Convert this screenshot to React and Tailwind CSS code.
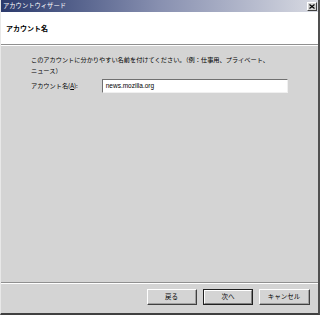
import React from 'react';

const jp = { fontFamily: '"Noto Sans CJK JP", "Liberation Sans", sans-serif' };

const Button = ({ label, isDefault }) => (
  <div
    className={
      'h-[16px] flex items-center justify-center bg-[#d4d4d4] text-[6.5px] text-black ' +
      (isDefault ? 'border border-[#202020]' : 'border border-t-white border-l-white border-r-[#404040] border-b-[#404040]')
    }
  >
    <div
      className={
        'w-full h-full flex items-center justify-center ' +
        (isDefault
          ? 'border border-t-white border-l-white border-r-[#808080] border-b-[#808080]'
          : 'border-r border-b border-r-[#a0a0a0] border-b-[#a0a0a0]')
      }
    >
      {label}
    </div>
  </div>
);

export default function App() {
  return (
    <div
      className="w-[320px] h-[315px] flex flex-col bg-[#d4d4d4] border-l border-l-[#e8e8e8] border-r-2 border-r-[#505050] border-b-2 border-b-[#404040] overflow-hidden"
      style={jp}
    >
      {/* title bar */}
      <div className="h-[12px] shrink-0 flex items-center justify-between pl-[2px] pr-[1px] bg-gradient-to-r from-[#2c3a6c] via-[#8890b0] to-[#d8dae2]">
        <span className="text-[6.3px] leading-none text-white">アカウントウィザード</span>
        <div className="w-[10px] h-[9px] flex items-center justify-center bg-[#d4d4d4] border border-t-white border-l-white border-r-[#404040] border-b-[#404040]">
          <svg width="6" height="5" viewBox="0 0 6 5">
            <path d="M0.5 0.5 L5.5 4.5 M5.5 0.5 L0.5 4.5" stroke="#000" strokeWidth="1.2" />
          </svg>
        </div>
      </div>

      {/* header */}
      <div className="h-[32px] shrink-0 bg-white flex items-center pl-[5px]">
        <span className="text-[7px] font-bold text-black">アカウント名</span>
      </div>
      <div className="h-[2px] shrink-0 border-t border-t-[#909090] border-b border-b-white" />

      {/* body */}
      <div className="flex-1 flex flex-col pl-[30px] pr-[30px]">
        <p className="mt-[8px] text-[6.2px] leading-[11px] text-black whitespace-nowrap">
          このアカウントに分かりやすい名前を付けてください。（例：仕事用、プライベート、
          <br />
          ニュース）
        </p>
        <div className="mt-[3px] flex items-center">
          <span className="w-[71px] text-[6.2px] text-black">アカウント名(<span className="underline">A</span>):</span>
          <div className="w-[187px] h-[14px] bg-white flex items-center pl-[3px] border border-t-[#707070] border-l-[#707070] border-r-[#f0f0f0] border-b-[#f0f0f0]">
            <span className="text-[6.5px] text-black" style={{ fontFamily: '"Liberation Sans", sans-serif' }}>
              news.mozilla.org
            </span>
          </div>
        </div>
      </div>

      {/* footer */}
      <div className="h-[2px] shrink-0 border-t border-t-[#909090] border-b border-b-white" />
      <div className="h-[29px] shrink-0 flex justify-end items-start pt-[5px] pr-[8px]">
        <div className="flex gap-[6px]">
          <div className="w-[50px]"><Button label="戻る" /></div>
          <div className="w-[50px]"><Button label="次へ" isDefault /></div>
          <div className="w-[51px]"><Button label="キャンセル" /></div>
        </div>
      </div>
    </div>
  );
}
